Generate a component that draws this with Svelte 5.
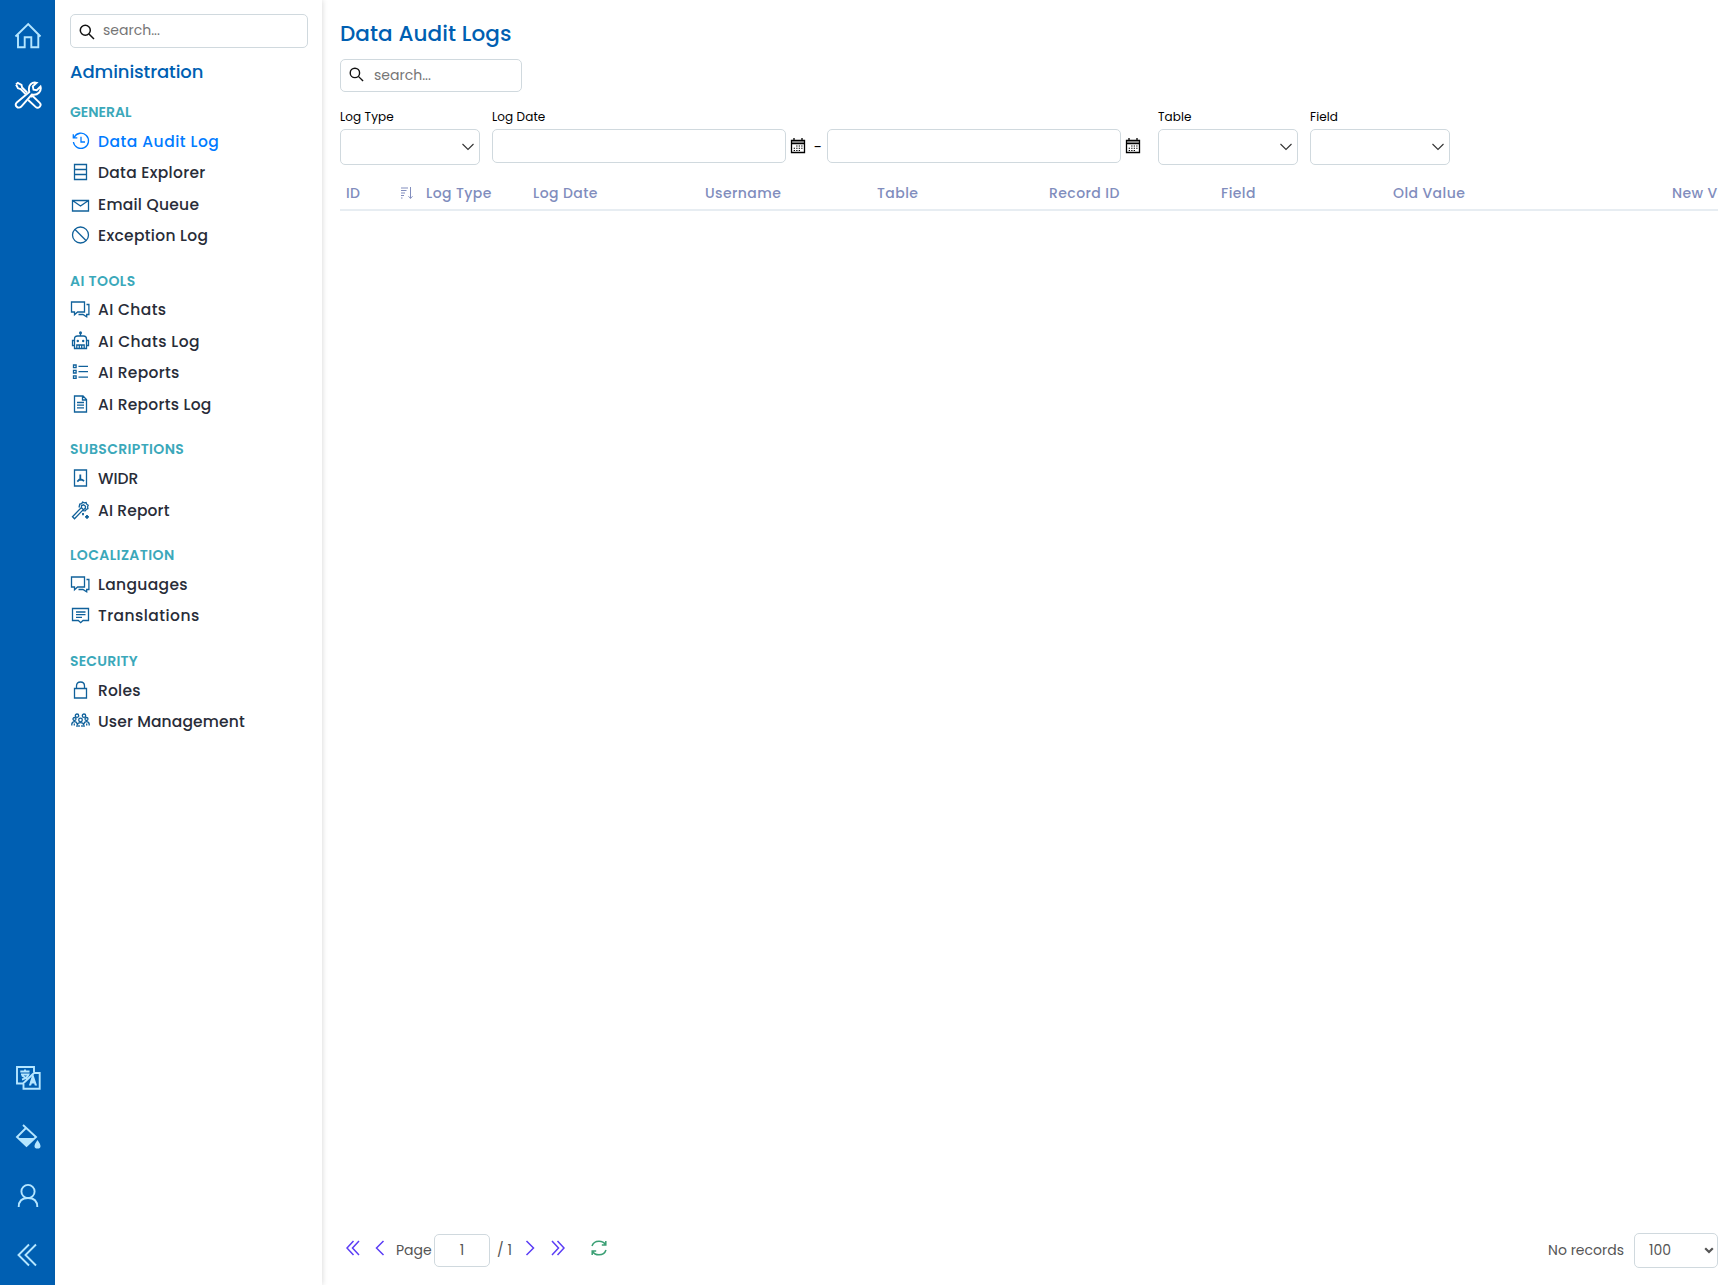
<script lang="ts">
	type Item = { label: string; icon: string; active?: boolean; tracking: number };
	type Group = { title: string; tracking: number; items: Item[] };

	const groups: Group[] = [
		{
			title: "GENERAL",
			tracking: 0,
			items: [
				{ label: "Data Audit Log", icon: "history", active: true, tracking: 0.5 },
				{ label: "Data Explorer", icon: "rows", tracking: 0.3 },
				{ label: "Email Queue", icon: "mail", tracking: 0.26 },
				{ label: "Exception Log", icon: "block", tracking: 0.3 },
			],
		},
		{
			title: "AI TOOLS",
			tracking: 0.42,
			items: [
				{ label: "AI Chats", icon: "chats", tracking: 0.36 },
				{ label: "AI Chats Log", icon: "robot", tracking: 0.42 },
				{ label: "AI Reports", icon: "list", tracking: 0.28 },
				{ label: "AI Reports Log", icon: "file", tracking: 0.26 },
			],
		},
		{
			title: "SUBSCRIPTIONS",
			tracking: 0.34,
			items: [
				{ label: "WIDR", icon: "pdf", tracking: 0 },
				{ label: "AI Report", icon: "wand", tracking: 0.13 },
			],
		},
		{
			title: "LOCALIZATION",
			tracking: 0.4,
			items: [
				{ label: "Languages", icon: "chats", tracking: 0.34 },
				{ label: "Translations", icon: "comment", tracking: 0.45 },
			],
		},
		{
			title: "SECURITY",
			tracking: 0.2,
			items: [
				{ label: "Roles", icon: "lock", tracking: 0.2 },
				{ label: "User Management", icon: "users", tracking: 0.13 },
			],
		},
	];

	const columns = ["ID", "Log Type", "Log Date", "Username", "Table", "Record ID", "Field", "Old Value", "New Value"];
	let page = "1";
	let pageSize = "100";
</script>

{#snippet navIcon(name: string)}
	<svg class="nav-icon" viewBox="0 0 21 21">
		{#if name === "history"}
			<path d="M4.2 6.2A7.6 7.6 0 1 1 3.4 11M3.3 3.2v3.6h4M11 5.8V11h4" />
		{:else if name === "rows"}
			<path d="M4.5 2.5h12v15h-12zM4.5 7.5h12M4.5 12.5h12" />
		{:else if name === "mail"}
			<path d="M2.5 6.5h16v10.5h-16zM2.5 6.5l8 5.5 8-5.5" />
		{:else if name === "block"}
			<circle cx="10.5" cy="10" r="8" /><path d="M4.8 4.3l11.4 11.4" />
		{:else if name === "chats"}
			<path d="M1.5 3h13v10H7.6L4.5 15.8V13h-3zM16.5 5.5h2.4v10h-2.2v2.4l-3.8-2.4H8.5" />
		{:else if name === "robot"}
			<path d="M10.5 2v3M4.5 17.5V8q0-3 3-3h6q3 0 3 3v9.5zM4.5 9.5h-2v5h2M16.5 9.5h2v5h-2M6.8 17.500v-3.500h7.400v3.500M9.300 14v3.500M11.700 14v3.500" />
			<circle class="solid" cx="10.5" cy="1.7" r="1.5" />
			<circle class="solid" cx="7.8" cy="10" r="1.2" />
			<circle class="solid" cx="13.2" cy="10" r="1.2" />
		{:else if name === "list"}
			<path d="M3.5 3h2.600v2.600H3.500zM3.500 8.400h2.600V11H3.500zM3.500 13.800h2.600v2.600H3.500zM8.500 4.300h9.500M8.500 9.700h9.500M8.500 15.100h9.500" />
		{:else if name === "file"}
			<path d="M4.5 2h8.500l3.500 3.500V18h-12zM12.500 2v4h4M7 8.500h7M7 11.200h7M7 13.900h7" />
		{:else if name === "pdf"}
			<path d="M4.5 2h12v16h-12z" />
			<path class="bold" d="M10.300 6.500v4.200l3.800 2.300M10.300 10.700l-3 3M8.300 12.200l3.500-.6" />
		{:else if name === "wand"}
			<path d="M2.500 16.800l8.800-9.200 2 2-8.800 9.200zM9 7.500L9.800 4l1.900-.4.900-1.500 1.800.7 1.700-.3.600 1.700 1.500 1-.6 1.700.3 1.800-1.700.8-1 1.400-2.400-.3M11.500 7.400V5.700l2-.9 2 1.500-.2 2-1.600 1.300" />
			<path class="bold" d="M13 13v2.200M17 15v3.800M15.100 16.900h3.800" />
		{:else if name === "comment"}
			<path d="M2.500 3.500h16v12h-5.500l-2.300 2.200-2.400-2.200H2.500zM6 7h9.500M6 9.700h9.500M6 12.300h6" />
		{:else if name === "lock"}
			<path d="M4.500 8.500h12v9.500h-12zM6.500 8.500V6q0-4 4-4t4 4v2.500" />
		{:else if name === "users"}
			<circle cx="7" cy="4.700" r="1.700" /><circle cx="14" cy="4.700" r="1.700" />
			<circle cx="4.500" cy="8" r="1.500" /><circle cx="16.500" cy="8" r="1.500" /><circle cx="10.500" cy="9" r="1.800" />
			<path d="M1.800 14.500V13q.5-2.300 2.700-2.300 2 0 2.600 2M19.200 14.500V13q-.5-2.300-2.700-2.300-2 0-2.600 2M7 16v-1.500q.6-2.800 3.500-2.800t3.500 2.800V16M4.300 12.500v2M16.700 12.500v2M9 14v2M12 14v2" />
		{/if}
	</svg>
{/snippet}

{#snippet magnifier()}
	<svg class="magnifier" viewBox="0 0 16 16"><circle cx="6.3" cy="6.3" r="5" /><path d="M10 10l5 5" /></svg>
{/snippet}

{#snippet calendar()}
	<svg class="calendar" viewBox="0 0 16 16">
		<path class="band" d="M1 2h14v3H1z" />
		<path d="M1.500 2.500h13v12h-13zM1.500 5.500h13M4 0v2.500M12 0v2.500" />
		<path class="dots" d="M6.200 8h6.300M3.700 10.300h8.800M3.700 12.500h6.300" />
	</svg>
{/snippet}

{#snippet selectBox()}
	<div class="box select">
		<svg viewBox="0 0 12 8"><path d="M.5 1L6 6.500 11.500 1" /></svg>
	</div>
{/snippet}

<div class="app">
	<nav class="rail">
		<a href="." aria-label="Home">
			<svg viewBox="0 0 28 28"><path d="M1.500 14.500L14.200 2l12.300 12.500M4 13v12.200h6.700v-10h6.600v10h7V13" /></svg>
		</a>
		<a href="." class="current" aria-label="Administration">
			<svg viewBox="0 0 28 28">
				<path d="M2 3.500l1.800-1.600 3.700 2 .6 2.500 5 5.100M2 3.500l2 3.800 2.600.7 5 5.100" />
				<path d="M15.300 11L2.800 21.500a2.900 2.900 0 0 0 4.200 4.300L17.800 13.500q4.500 1 7.300-2 2.400-2.700 1.400-6l-3.800 3.700-3.200-.6-.7-3.200 3.900-3.600q-3.500-1-6 1.400-2.700 2.800-1.400 7.800z" />
				<path d="M17 16l1.700-1 7 6.800a2.900 2.900 0 0 1-4.100 4.100L14.200 19" />
			</svg>
		</a>
		<span class="grow"></span>
		<a href="." aria-label="Language">
			<svg viewBox="0 0 28 28">
				<path d="M9 19.500H3V3h17v5M9.500 20v4.700h16.200V9H20L8.500 20" />
				<path d="M6.300 7.500h9.200M11 5.500v2M7 10.500h7.500q-1.500 4-6.500 5M8 11.500l5 3.200" />
				<path class="solid" d="M18.200 11h1.300l3.500 10.500h-2.200l-.6-2h-2.400l-.7 2h-2.200z" />
			</svg>
		</a>
		<a href="." aria-label="Theme">
			<svg viewBox="0 0 28 28">
				<path d="M9 2l13 12-9.500 9-9.500-9 9-9" />
				<path class="solid" d="M4 15h17l-8.500 8zM23.500 17q6 8 0 8.500-6-.5 0-8.500z" />
			</svg>
		</a>
		<a href="." aria-label="Profile">
			<svg viewBox="0 0 28 28"><circle cx="14" cy="9.500" r="6.600" /><path d="M4.700 25q0-9 9.300-9t9.300 9" /></svg>
		</a>
		<a href="." aria-label="Collapse">
			<svg viewBox="0 0 28 28"><path d="M15 3.500L4.500 14 15 24.500M22 3.500L11.500 14 22 24.500" /></svg>
		</a>
	</nav>

	<aside class="sidebar">
		<label class="box search">
			{@render magnifier()}
			<input placeholder="search..." />
		</label>
		<h2>Administration</h2>
		{#each groups as group}
			<section>
				<h3 style="letter-spacing: {group.tracking}px">{group.title}</h3>
				{#each group.items as item}
					<a href="." class="item" class:active={item.active}>
						{@render navIcon(item.icon)}
						<span style="letter-spacing: {item.tracking}px">{item.label}</span>
					</a>
				{/each}
			</section>
		{/each}
	</aside>

	<main>
		<h1>Data Audit Logs</h1>
		<label class="box search table-search">
			{@render magnifier()}
			<input placeholder="search..." />
		</label>

		<div class="filters">
			<div class="filter">
				<span class="label">Log Type</span>
				{@render selectBox()}
			</div>
			<div class="filter dates">
				<span class="label">Log Date</span>
				<div class="range">
					<input class="box date" />
					{@render calendar()}
					<span class="dash">-</span>
					<input class="box date" />
					{@render calendar()}
				</div>
			</div>
			<div class="filter">
				<span class="label">Table</span>
				{@render selectBox()}
			</div>
			<div class="filter">
				<span class="label">Field</span>
				{@render selectBox()}
			</div>
		</div>

		<div class="grid-head">
			{#each columns as column, i}
				<div class="cell">
					<span>{column}</span>
					{#if i === 0}
						<svg class="sort" viewBox="0 0 12 12">
							<path d="M0 1h7M0 3.500h5.500M0 6h4M0 8.500h3M0 11h1.500M9.500 0v11.500M7.500 9.300l2 2 2-2" />
						</svg>
					{/if}
				</div>
			{/each}
		</div>
		<div class="grid-body"></div>

		<footer>
			<svg class="pager first" viewBox="0 0 14 16"><path d="M7.500 1L1 8l6.500 7M13 1L6.500 8l6.500 7" /></svg>
			<svg class="pager prev" viewBox="0 0 10 16"><path d="M8.500 1L1.500 8l7 7" /></svg>
			<span class="page-label">Page</span>
			<input class="box page" bind:value={page} />
			<span class="total">/ 1</span>
			<svg class="pager next" viewBox="0 0 10 16"><path d="M1.500 1l7 7-7 7" /></svg>
			<svg class="pager last" viewBox="0 0 14 16"><path d="M1 1l6.500 7L1 15M6.500 1L13 8l-6.500 7" /></svg>
			<svg class="pager refresh" viewBox="0 0 16 16">
				<path d="M1 6Q2.500 1.300 8 1.200q4.500 0 6.500 3.300M14.800 1v4h-4M15 10q-1.500 4.700-7 4.800-4.500 0-6.500-3.300M1.200 15v-4h4" />
			</svg>
			<span class="grow"></span>
			<span class="records">No records</span>
			<div class="box size">
				<span>{pageSize}</span>
				<svg viewBox="0 0 10 7"><path d="M1.200 1.200L5 5l3.800-3.800" /></svg>
			</div>
		</footer>
	</main>
</div>

<style>
	:global(body) {
		background: #fff;
	}

	.app {
		display: flex;
		height: 1285px;
		overflow: hidden;
		font-family: Poppins, Inter, sans-serif;
		color: #000;
	}

	.app :global(*) {
		box-sizing: border-box;
	}

	a {
		text-decoration: none;
	}

	svg {
		display: block;
		flex: none;
		fill: none;
		stroke: currentColor;
	}

	.solid {
		fill: currentColor;
		stroke: none;
	}

	.bold {
		stroke-width: 1.8;
	}

	.grow {
		flex: 1;
	}

	.rail {
		display: flex;
		flex-direction: column;
		flex: none;
		width: 55px;
		padding: 6px 0 1px;
		background: #005fb2;
	}

	.rail a {
		display: flex;
		align-items: center;
		justify-content: center;
		height: 59px;
		color: #b5e6ff;
	}

	.rail a.current {
		color: #fff;
	}

	.rail svg {
		width: 28px;
		height: 28px;
		stroke-width: 1.9;
	}

	.sidebar {
		flex: none;
		width: 267px;
		padding: 14px 14px 0 15px;
		box-shadow: 1px 0 5px rgba(0, 0, 0, 0.13);
	}

	.box {
		border: 1px solid #d0d9de;
		border-radius: 5px;
		background: #fff;
	}

	.search {
		display: flex;
		align-items: center;
		height: 34px;
		padding-left: 8px;
	}

	.search input {
		flex: 1;
		min-width: 0;
		padding: 0;
		border: 0;
		outline: 0;
		background: none;
		font: 14px Poppins, Inter, sans-serif;
		margin: 0 0 1px 8px;
	}

	.search input::placeholder {
		color: #757575;
	}

	.magnifier {
		width: 16px;
		height: 16px;
		margin-top: 1px;
		color: #111;
		stroke-width: 1.5;
	}

	h2 {
		margin: 11px 0 14px;
		font-size: 18px;
		line-height: 26px;
		font-weight: 500;
		color: #005fb2;
		letter-spacing: -0.1px;
	}

	section {
		margin-bottom: 16.2px;
	}

	h3 {
		margin: 0;
		font-size: 14px;
		line-height: 26.5px;
		font-weight: 600;
		color: #3ba8ba;
	}

	.item {
		display: flex;
		align-items: center;
		gap: 7px;
		height: 31.5px;
		font-size: 15.5px;
		font-weight: 500;
		color: #282c38;
		white-space: nowrap;
	}

	.nav-icon {
		width: 21px;
		height: 21px;
		color: #10619b;
		stroke-width: 1.3;
	}

	.item.active,
	.item.active .nav-icon {
		color: #007bff;
	}

	main {
		display: flex;
		flex-direction: column;
		flex: 1;
		min-width: 0;
		padding: 18px 17px 0 18px;
	}

	h1 {
		margin: 0;
		font-size: 21.5px;
		line-height: 31px;
		font-weight: 500;
		color: #005fb2;
		letter-spacing: 0.1px;
	}

	.table-search {
		width: 182px;
		height: 33px;
		margin-top: 10px;
	}

	.table-search .magnifier {
		width: 15px;
		height: 15px;
		margin: 0 2px 3px 0;
	}

	.table-search input {
		margin-bottom: 0;
	}

	.filters {
		display: flex;
		gap: 12px;
		margin-top: 15px;
	}

	.dates {
		margin-right: 5px;
	}

	.label {
		display: block;
		font-size: 12px;
		line-height: 20px;
		margin-bottom: 2px;
		letter-spacing: 0.1px;
	}

	.select {
		display: flex;
		align-items: center;
		justify-content: flex-end;
		width: 140px;
		height: 36px;
		padding: 0 5px 1px 0;
	}

	.select svg {
		width: 12px;
		height: 8px;
		color: #333;
		stroke-width: 1.1;
	}

	.range {
		display: flex;
		align-items: center;
	}

	.date {
		width: 294px;
		height: 34px;
		padding: 0 8px;
	}

	.calendar {
		width: 16px;
		height: 16px;
		margin-left: 4px;
		stroke-width: 1.3;
	}

	.calendar .band {
		fill: #aaa;
		stroke: none;
	}

	.calendar .dots {
		stroke-width: 1.1;
		stroke-dasharray: 1.3 1.2;
	}

	.dash {
		width: 21px;
		padding-left: 3px;
		text-align: center;
		font-size: 15px;
	}

	.grid-head {
		display: grid;
		grid-template-columns: 80px 107px 172px 172px 172px 172px 172px 279px 172px;
		flex: none;
		height: 46px;
		padding-top: 11px;
		overflow: hidden;
		border-bottom: 2px solid #e7edf2;
		font-size: 14px;
		line-height: 34px;
		font-weight: 500;
		letter-spacing: 0.42px;
		color: #818dbd;
	}

	.cell {
		display: flex;
		align-items: center;
		justify-content: space-between;
		height: 34px;
		padding: 0 7px 0 6px;
		white-space: nowrap;
	}

	.sort {
		width: 12px;
		height: 12px;
	}

	.grid-body {
		flex: 1;
	}

	footer {
		display: flex;
		align-items: center;
		height: 70px;
		font-size: 14px;
		color: #555;
	}

	.pager {
		height: 16px;
		margin-bottom: 4px;
		color: #5b3df5;
		stroke-width: 1.5;
	}

	.first {
		width: 14px;
		margin-left: 6px;
	}

	.prev {
		width: 10px;
		margin-left: 15px;
	}

	.page-label {
		width: 38px;
		margin-left: 11px;
	}

	.page {
		width: 56px;
		height: 33px;
		padding: 0;
		text-align: center;
		font: 14px Poppins, Inter, sans-serif;
		color: #555;
	}

	.total {
		width: 16px;
		margin-left: 7px;
		white-space: nowrap;
	}

	.next {
		width: 10px;
		margin-left: 12px;
	}

	.last {
		width: 14px;
		margin-left: 16px;
	}

	.refresh {
		width: 16px;
		margin-left: 26px;
		color: #3a9f74;
	}

	.records {
		margin-right: 10px;
	}

	.size {
		display: flex;
		align-items: center;
		justify-content: space-between;
		width: 84px;
		height: 35px;
		padding: 0 3px 0 14px;
	}

	.size svg {
		width: 10px;
		height: 7px;
		stroke-width: 2.2;
	}
</style>
